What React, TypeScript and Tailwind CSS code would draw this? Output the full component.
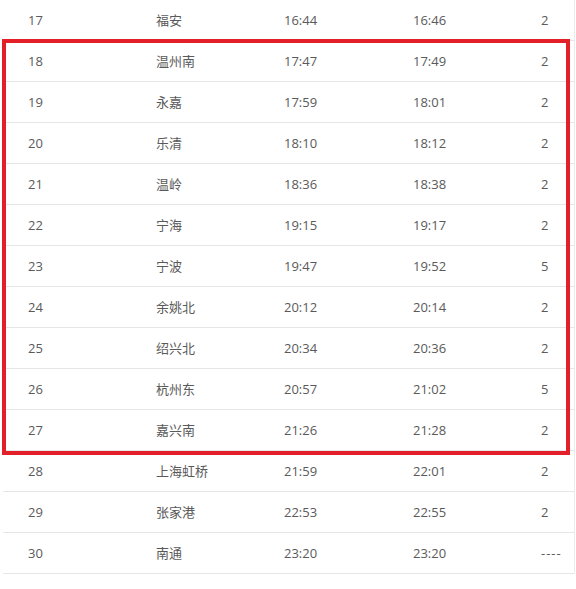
const rows: [string, string, string, string, string][] = [
  ["17", "福安", "16:44", "16:46", "2"],
  ["18", "温州南", "17:47", "17:49", "2"],
  ["19", "永嘉", "17:59", "18:01", "2"],
  ["20", "乐清", "18:10", "18:12", "2"],
  ["21", "温岭", "18:36", "18:38", "2"],
  ["22", "宁海", "19:15", "19:17", "2"],
  ["23", "宁波", "19:47", "19:52", "5"],
  ["24", "余姚北", "20:12", "20:14", "2"],
  ["25", "绍兴北", "20:34", "20:36", "2"],
  ["26", "杭州东", "20:57", "21:02", "5"],
  ["27", "嘉兴南", "21:26", "21:28", "2"],
  ["28", "上海虹桥", "21:59", "22:01", "2"],
  ["29", "张家港", "22:53", "22:55", "2"],
  ["30", "南通", "23:20", "23:20", "----"],
];

export default function App() {
  return (
    <div
      className="relative w-[576px] h-[589px] bg-white overflow-hidden text-[13px] text-[#5a5a5a]"
      style={{ fontFamily: '"Open Sans", "Noto Sans CJK SC", sans-serif' }}
    >
      <div className="ml-[3px] w-[572px] border-t border-r border-[#ececec] -mt-[1px]">
        {rows.map((r) => (
          <div
            key={r[0]}
            className="grid grid-cols-[128px_128px_129px_128px_1fr] h-[41px] items-center border-b border-[#e6e6e6] pl-[25px] pt-[2px]"
          >
            {r.map((c, i) => (
              <span key={i} className={c === "----" ? "tracking-[1px]" : ""}>
                {c}
              </span>
            ))}
          </div>
        ))}
      </div>

      {/* highlight frame */}
      <div className="absolute left-[2px] top-[39px] w-[568px] h-[416px] border-[4px] border-[#e3202a] pointer-events-none" />
    </div>
  );
}
